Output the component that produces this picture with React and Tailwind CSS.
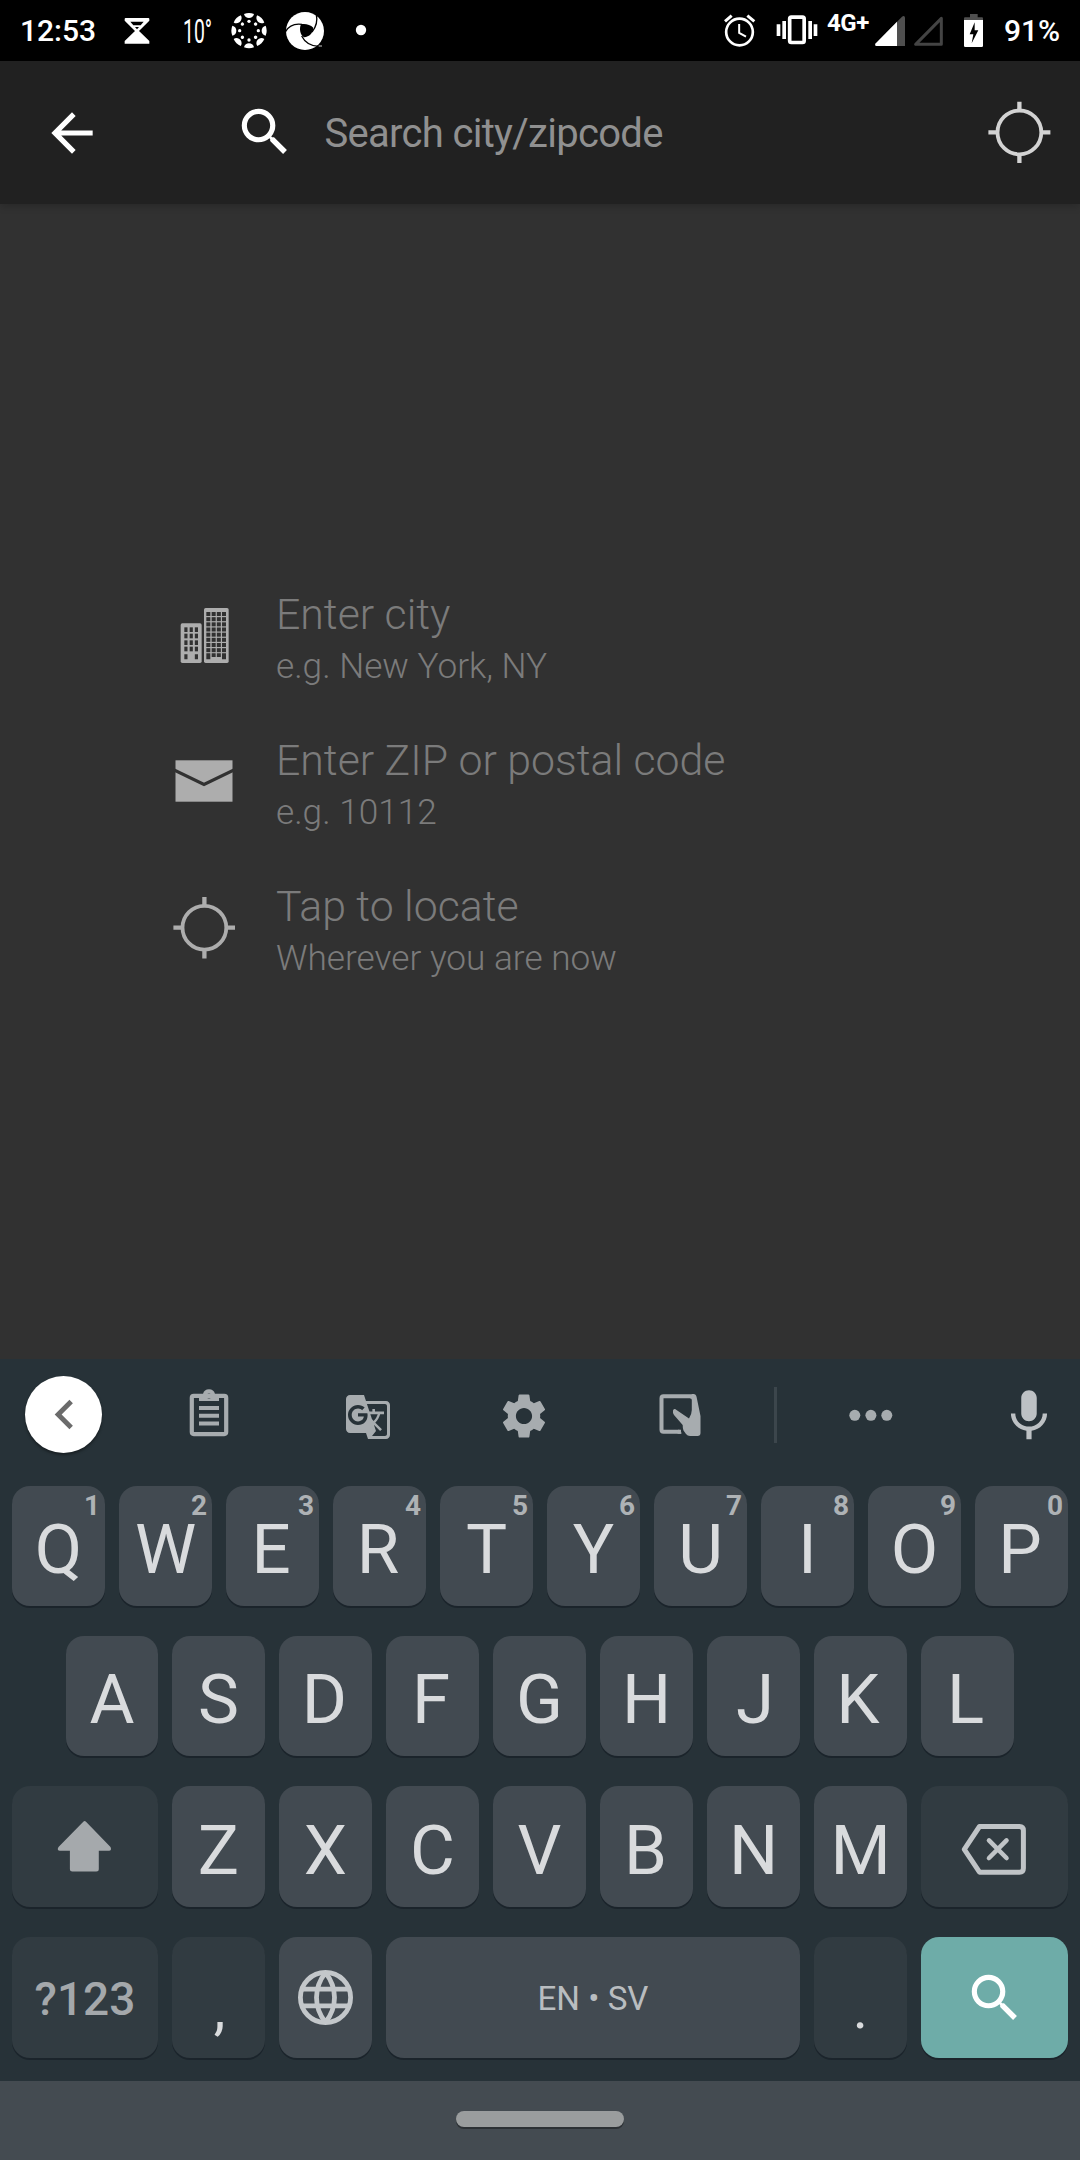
import React from "react";
import { MdArrowBack, MdSearch, MdGTranslate, MdMic, MdChevronLeft, MdSettings } from "react-icons/md";

function Art({ box, w, h, className = "", children }) {
  return (
    <svg viewBox={box} width={w} height={h} className={`block shrink-0 ${className}`} fill="currentColor" aria-hidden="true">
      {children}
    </svg>
  );
}

function StatusBar() {
  return (
    <div className="flex h-[61px] items-start bg-black text-white">
      <div className="ml-5 w-20 text-[30px] leading-[62px] font-medium">12:53</div>
      <Art box="372 0 78 183" w={26} h={61} className="ml-6">
        <path fillRule="evenodd" d="M377 54H445Q448 54 448 57V62L417 93L448 123V131H374V123L405 93L374 62V57Q374 54 377 54ZM391 65L400 76H422L431 65ZM405 81L411 88L417 81Z" />
      </Art>
      <div className="ml-[33px] w-[30px] whitespace-nowrap">
        <div className="w-[50px] origin-left scale-x-[0.57] text-[34px] leading-[62px]">10°</div>
      </div>
      <Art box="693 0 108 183" w={36} h={61} className="ml-[18px]">
        {[0, 45, 90, 135, 180, 225, 270, 315].map((a) => (
          <g key={a} transform={`translate(747 92) rotate(${a})`}>
            <path d="M-15 -50Q0 -56 15 -50C12 -34 -12 -34 -15 -50Z" />
            <circle cx="0" cy="-28" r="5" />
          </g>
        ))}
      </Art>
      <Art box="855 0 120 183" w={40} h={61} className="ml-[18px]">
        <circle cx="915" cy="93" r="57" />
        <path fill="#000" d="M903 73C916 70 930 74 940 83C940 98 928 110 912 112C900 106 897 85 903 73Z" />
        <g fill="none" stroke="#000" strokeWidth="4">
          <path d="M856 96C866 77 884 70 906 73" />
          <path d="M949 44C953 62 949 80 936 96" />
          <path d="M905 108C914 126 930 138 956 139" />
        </g>
        <path d="M956 136h10v4h-10z" fill="#999" />
      </Art>
      <Art box="1065 0 36 183" w={12} h={61} className="ml-[30px]">
        <circle cx="1083" cy="90" r="15.5" />
      </Art>
      <Art box="72 0 96 183" w={32} h={61} className="ml-[357px]">
        <g fill="none" stroke="#fff" strokeWidth="8">
          <circle cx="118.500" cy="96" r="40" />
          <path d="M117.500 72V99L138 110" strokeWidth="6" />
          <path d="M75 64L95 47M142 47L163 64" strokeWidth="9" />
        </g>
      </Art>
      <Art box="228 0 126 183" w={42} h={61} className="ml-5">
        <rect x="269" y="51.500" width="43.500" height="76" rx="5" fill="none" stroke="#fff" strokeWidth="11" />
        <path d="M247 63h11v54h-11zM230 73h11v35h-11zM325 63h11v54h-11zM341 73h11v35h-11z" />
      </Art>
      <div className="ml-[9px] w-[45px] text-[24px] leading-[47px] font-bold tracking-[-0.4px]">4G+</div>
      <Art box="522 0 96 183" w={32} h={61} className="ml-0.5">
        <path d="M529 138H615V52Q612 45 606 50L526 131Q523 136 529 138Z" fill="#4f4f4f" />
        <path d="M529 138H591V65L526 131Q523 136 529 138Z" />
      </Art>
      <Art box="636 0 96 183" w={32} h={61} className="ml-1.5">
        <path d="M647 133H724V55Z" fill="none" stroke="#444" strokeWidth="9" strokeLinejoin="round" />
      </Art>
      <Art box="789 0 63 183" w={21} h={61} className="ml-[19px]">
        <path d="M810 42h23v10h13q3 0 3 4v6h-57v-6q0-4 3-4h15z" fill="#4f4f4f" />
        <path d="M792 60h57v77q0 4-4 4h-49q-4 0-4-4z" />
        <path d="M824 67L809 103H820L815 130L835 91H824Z" fill="#000" />
      </Art>
      <div className="ml-5 text-[30px] leading-[62px] font-medium">91%</div>
    </div>
  );
}

function Crosshair({ cx, cy }) {
  return (
    <g fill="none" stroke="currentColor">
      <circle cx={cx} cy={cy} r="21.900" strokeWidth="3.800" />
      <path strokeWidth="4.300" d={`M${cx} ${cy - 30.7}v8M${cx} ${cy + 22.7}v8M${cx - 31} ${cy}h8M${cx + 23} ${cy}h8`} />
    </g>
  );
}

function SearchHeader() {
  return (
    <header className="relative flex h-[143px] items-center bg-[#212121] text-white shadow-[0_2px_8px_rgba(0,0,0,0.2)]">
      <MdArrowBack size={62} className="ml-[41px]" />
      <MdSearch size={62} className="-mt-0.5 ml-[131px]" />
      <div className="ml-[28.500px] pt-[3px] text-[40px] leading-[48px] tracking-[-0.7px] text-[#909090]">Search city/zipcode</div>
      <Art box="987 100 65 65" w={65} h={65} className="ml-auto mr-7 text-[#d3d3d3]">
        <Crosshair cx={1019.4} cy={132.4} />
      </Art>
    </header>
  );
}

function Buildings() {
  const rows = [96, 111.5, 127, 142.5, 158, 173.5, 189, 204.5];
  return (
    <Art box="39 24 186 300" w={62} h={100}>
      <rect x="62" y="130" width="63" height="119" rx="5" />
      <rect x="132" y="84" width="74" height="165" rx="5" />
      <g fill="#313131">
        {[142, 161, 181, 200].map((y) => [73, 89, 104.5].map((x) => <rect key={`${x}-${y}`} x={x} y={y} width="9.500" height="14" />))}
        <path d="M73 223h9.500v15h-9.500zM104.500 223h9.500v15h-9.500zM139 220h12v18h-12zM155 220h12v11h-12zM170.500 220h12v11h-12zM186 220h12v18h-12z" />
        {rows.map((y) => [139, 155, 170.5, 186].map((x) => <rect key={`${x}-${y}`} x={x} y={y} width="12" height="12" />))}
      </g>
    </Art>
  );
}

function Envelope() {
  return (
    <Art box="173 734 62 100" w={62} h={100}>
      <rect x="175.500" y="760.300" width="57" height="41.400" />
      <path d="M173 769.500L204 784.500L235 769.500" fill="none" stroke="#313131" strokeWidth="3.200" />
    </Art>
  );
}

function Hint({ icon, title, sub }) {
  return (
    <div className="flex h-[100px] text-[#7b7b7b]">
      <div className="w-[62px] text-[#adadad]">{icon}</div>
      <div className="ml-[41px] font-light whitespace-nowrap">
        <div className="text-[42.800px] leading-[52px]">{title}</div>
        <div className="mt-1 text-[35.200px] leading-[44px]">{sub}</div>
      </div>
    </div>
  );
}

function Hints() {
  return (
    <main className="flex h-[1155px] flex-col gap-[46px] bg-[#313131] pt-96 pl-[173px]">
      <Hint icon={<Buildings />} title="Enter city" sub="e.g. New York, NY" />
      <Hint icon={<Envelope />} title="Enter ZIP or postal code" sub="e.g. 10112" />
      <Hint
        icon={<Art box="173 880 62 100" w={62} h={100}><Crosshair cx={204.4} cy={927.7} /></Art>}
        title="Tap to locate"
        sub="Wherever you are now"
      />
    </main>
  );
}

function Toolbar() {
  return (
    <div className="flex h-[127px] items-start text-[#a7acaf]">
      <div className="mt-[17px] ml-[25px] flex size-[77px] items-center justify-center rounded-full bg-white pl-[2px] text-[#6b6b6b] shadow-[0_2px_3px_rgba(0,0,0,0.4)]">
        <MdChevronLeft size={59} />
      </div>
      <Art box="188 1359 42 127" w={42} h={127} className="ml-[86px]">
        <rect x="191.800" y="1395.800" width="34.400" height="38.300" rx="2" fill="none" stroke="currentColor" strokeWidth="4.200" />
        <path fillRule="evenodd" d="M199 1394H203A6.200 6.200 0 0 1 215 1394H219V1401H199ZM211.500 1396A2.500 2.500 0 1 0 206.500 1396A2.500 2.500 0 1 0 211.500 1396Z" />
        <path d="M199 1406h20v4h-20zM199 1413.700h20v4h-20zM199 1421.500h20v4h-20z" />
      </Art>
      <MdGTranslate size={48} className="mt-[34px] ml-[114px] shrink-0" />
      <MdSettings size={54} className="mt-[30px] ml-[105px] shrink-0" />
      <Art box="658 1359 44 127" w={44} h={127} className="ml-[107px]">
        <path fill="none" stroke="currentColor" strokeWidth="4" d="M681 1431.700H663.500Q661.500 1431.700 661.500 1429.700V1398.300Q661.500 1396.200 663.500 1396.200H694" />
        <path d="M692 1394H693.500Q696 1394 696.600 1397L700.500 1416V1433Q700.500 1436 697.500 1436H690Q687.500 1436 686 1434L683.500 1430.500Q682.700 1429 682.700 1425L674 1415Q672.500 1412.500 673 1410.500Q674.200 1408 676.500 1410L689 1418.500Q691.800 1414 691.800 1410V1400Q691.800 1398.300 690 1398.300Z" />
        <path d="M678 1429.700h1q2 0 2.500 4h-4z" />
      </Art>
      <div className="mt-7 ml-[72px] h-14 w-[3px] bg-[#3c464c]" />
      <Art box="848 1359 46 127" w={46} h={127} className="ml-[71px]">
        <circle cx="854.800" cy="1415.300" r="5.500" />
        <circle cx="870.900" cy="1415.300" r="5.500" />
        <circle cx="886.800" cy="1415.300" r="5.500" />
      </Art>
      <MdMic size={62} className="mt-[26px] ml-[103.500px] shrink-0 text-[#bdc1c4]" />
    </div>
  );
}

function Key({ children, className = "w-[93px] bg-[#424a51]", hint }) {
  return (
    <div className={`relative flex shrink-0 items-center justify-center rounded-[18px] text-[#d9dbdd] shadow-[0_2px_0_#1b242b] ${className}`}>
      {children}
      {hint && <span className="absolute top-1 right-[5px] text-[28px] leading-[32px] font-bold text-[#aeb2b5]">{hint}</span>}
    </div>
  );
}

// Centres the drawn shape of letters whose side bearings are uneven.
const OPTICAL = {
  E: "pr-[3px]", R: "pr-[3px]", F: "pr-[3px]", P: "pr-[3px]",
  K: "pr-[5px]", L: "pr-1", D: "pr-0.5", B: "pr-0.5", J: "pl-[3px]",
};

function Letter({ children }) {
  return <span className={`pt-2 text-[69px] leading-[80px] ${OPTICAL[children] ?? ""}`}>{children}</span>;
}

const FUNC = "bg-[#313b41]";

function Keyboard() {
  return (
    <section className="h-[722px] bg-[#273238]">
      <Toolbar />
      <div className="flex h-[120px] gap-3.5 pl-3">
        {[..."QWERTYUIOP"].map((c, i) => (
          <Key key={c} hint={String((i + 1) % 10)}><Letter>{c}</Letter></Key>
        ))}
      </div>
      <div className="mt-[30px] flex h-[120px] gap-3.5 pl-[66px]">
        {[..."ASDFGHJKL"].map((c) => (
          <Key key={c} className={c === "A" ? "w-[92px] bg-[#424a51]" : "w-[93px] bg-[#424a51]"}><Letter>{c}</Letter></Key>
        ))}
      </div>
      <div className="mt-[30px] flex h-[121px] gap-3.5 pl-3">
        <Key className={`w-[146px] ${FUNC}`}>
          <Art box="55 1819 60 55" w={60} h={55} className="text-[#a5a9ac]">
            <path d="M83.300 1821.700Q84.600 1820.500 86 1821.700L110.500 1847Q112 1850.500 109 1850.700H98.800V1869Q98.800 1871.500 96.300 1871.500H72.400Q69.900 1871.500 69.900 1869V1850.700H60Q56.500 1850.500 58.500 1847Z" />
          </Art>
        </Key>
        {[..."ZXCVBNM"].map((c) => (
          <Key key={c}><Letter>{c}</Letter></Key>
        ))}
        <Key className={`w-[147px] ${FUNC}`}>
          <Art box="960 1821 70 56" w={70} h={56} className="mt-[5px] text-[#c0c4c7]">
            <g fill="none" stroke="currentColor" strokeLinejoin="round">
              <path strokeWidth="5" d="M979.500 1826.500H1019.500Q1023.400 1826.500 1023.400 1830.500V1868.200Q1023.400 1872.200 1019.500 1872.200H979.500L964.300 1849.300Z" />
              <path strokeWidth="4.600" strokeLinecap="round" d="M989 1840.400L1006.500 1858M1006.500 1840.400L989 1858" />
            </g>
          </Art>
        </Key>
      </div>
      <div className="mt-[30px] flex h-[121px] gap-3.5 pl-3">
        <Key className={`w-[146px] ${FUNC}`}>
          <span className="pt-[3px] text-[46px] leading-[54px] font-medium text-[#a4a8ab]">?123</span>
        </Key>
        <Key className={`w-[93px] ${FUNC}`}><span className="pt-[21px] pl-0.5 text-[59px] leading-[80px]">,</span></Key>
        <Key>
          <Art box="295 1967 61 61" w={61} h={61}>
            <g fill="none" stroke="#c3c7ca" strokeWidth="4.800" strokeLinejoin="bevel">
              <circle cx="325.500" cy="1997.500" r="25.100" />
              <path d="M302 1989.200H349M302 2005.800H349" />
              <path d="M325.500 1972.500C313.500 1988 313.500 2007 325.500 2022.500C337.500 2007 337.500 1988 325.500 1972.500Z" />
            </g>
          </Art>
        </Key>
        <Key className="w-[414px] bg-[#424a51]">
          <span className="pt-[3px] text-[33.200px] leading-[40px] text-[#b9bdc0]">EN • SV</span>
        </Key>
        <Key className={`w-[93px] ${FUNC}`}><span className="pt-5 text-[58px] leading-[80px]">.</span></Key>
        <Key className="w-[147px] bg-[#6eaca8]">
          <MdSearch size={62} className="text-white" />
        </Key>
      </div>
    </section>
  );
}

export default function App() {
  return (
    <div className="h-[2160px] w-[1080px] overflow-hidden bg-[#313131] font-[Roboto,sans-serif]">
      <StatusBar />
      <SearchHeader />
      <Hints />
      <Keyboard />
      <footer className="flex h-[79px] justify-center bg-[#444b51] pt-[30px]">
        <div className="h-4 w-[168px] rounded-full bg-[#9a9d9e] shadow-[0_2px_0_#2c3135]" />
      </footer>
    </div>
  );
}
